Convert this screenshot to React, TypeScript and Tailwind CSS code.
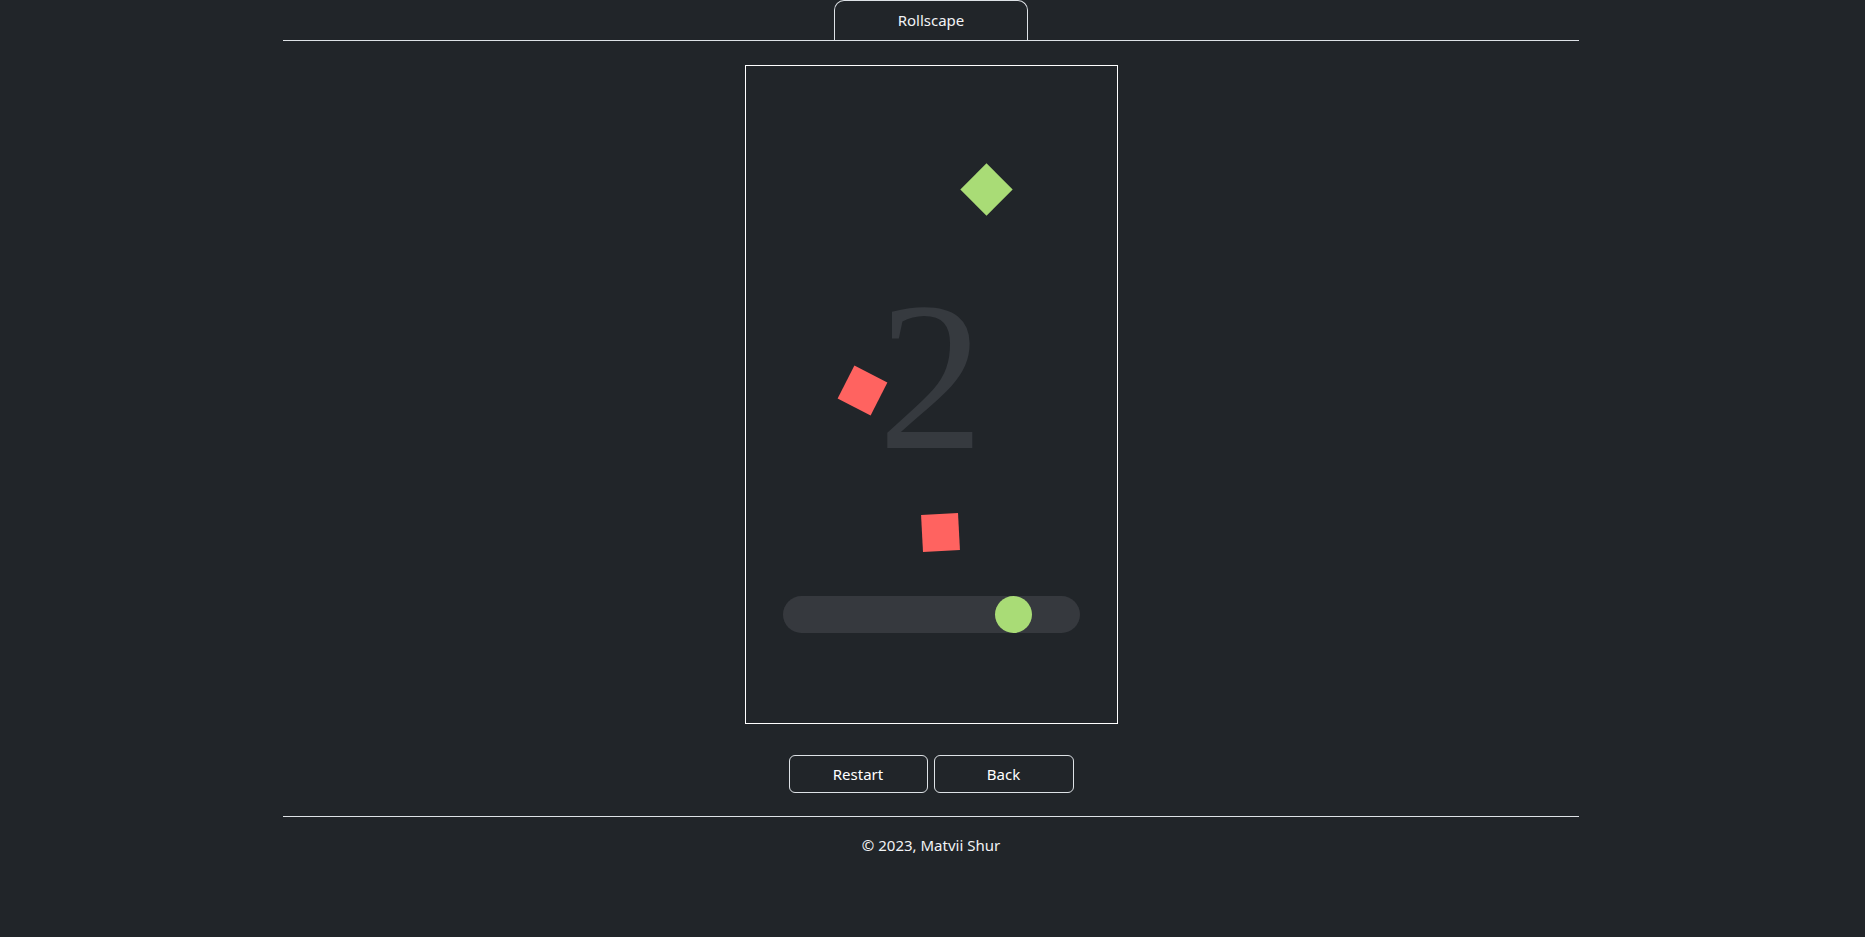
import React from "react";

export default function App() {
  return (
    <div
      className="min-h-[937px] w-full bg-[#212529] text-[#f1f3f5]"
      style={{ fontFamily: '"Noto Sans", "Open Sans", sans-serif' }}
    >
      <div className="mx-auto w-[1299px] pr-[3px]">
        {/* Header */}
        <div className="flex justify-center border-b border-[#dee2e6]">
          <div className="flex h-[40px] w-[194px] items-center justify-center rounded-t-[10px] border border-b-0 border-[#dee2e6] text-[15px]">
            Rollscape
          </div>
        </div>

        {/* Game */}
        <div className="flex flex-col items-center pt-[24px]">
          <div className="relative h-[659px] w-[373px] overflow-hidden border border-white">
            <div
              className="absolute left-0 right-0 top-[205px] text-center text-[212px] leading-none text-[#363a3f]"
              style={{ fontFamily: '"Liberation Serif", serif' }}
            >
              2
            </div>
            {/* green diamond */}
            <div className="absolute left-[222px] top-[105px] h-[37px] w-[37px] rotate-45 bg-[#a9dc76]" />
            {/* red squares */}
            <div className="absolute left-[98px] top-[306px] h-[37px] w-[37px] rotate-[27deg] bg-[#ff6360]" />
            <div className="absolute left-[176px] top-[448px] h-[37px] w-[37px] -rotate-3 bg-[#ff6360]" />
            {/* slider */}
            <div className="absolute left-[37px] top-[530px] h-[37px] w-[297px] rounded-full bg-[#36393e]" />
            <div className="absolute left-[249px] top-[530px] h-[37px] w-[37px] rounded-full bg-[#a9dc76]" />
          </div>

          <div className="mt-[31px] flex gap-[6px]">
            <button className="h-[38px] w-[139px] rounded-[6px] border border-[#dee2e6] text-[15px] text-white">
              Restart
            </button>
            <button className="h-[38px] w-[140px] rounded-[6px] border border-[#dee2e6] text-[15px] text-white">
              Back
            </button>
          </div>
        </div>

        {/* Footer */}
        <div className="mt-[23px] border-t border-[#dee2e6] pt-[17px] text-center text-[15px]">
          © 2023, Matvii Shur
        </div>
      </div>
    </div>
  );
}
